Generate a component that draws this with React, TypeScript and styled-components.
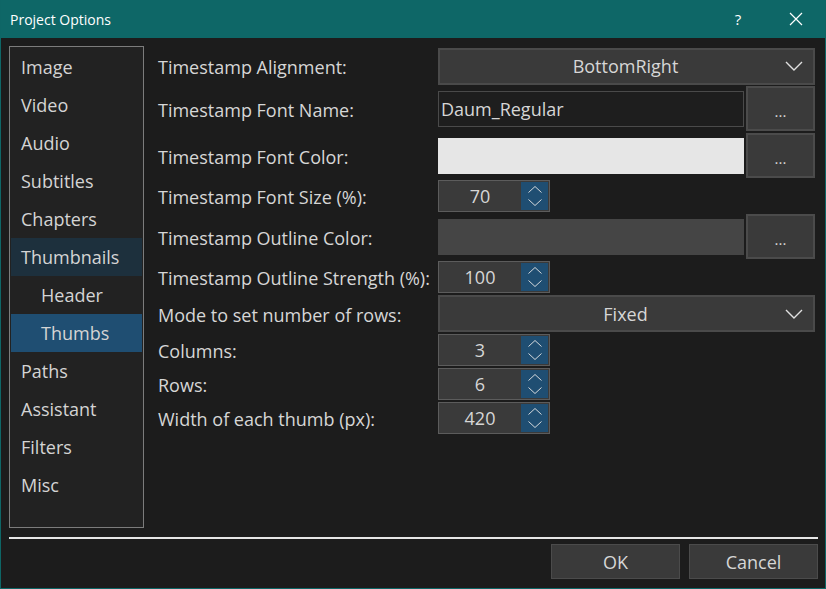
import React from "react";
import styled, { createGlobalStyle } from "styled-components";

const GlobalStyle = createGlobalStyle`
  html, body { margin: 0; padding: 0; background: #1c1c1c; }
  * { box-sizing: border-box; }
`;

const FONT = `"Open Sans", "Noto Sans", "Liberation Sans", sans-serif`;

const Window = styled.div`
  width: 826px;
  height: 589px;
  display: flex;
  flex-direction: column;
  background: #1c1c1c;
  border: 1px solid #0e6666;
  border-top: none;
  font-family: ${FONT};
  color: #d6d6d6;
  overflow: hidden;
`;

const TitleBar = styled.div`
  height: 38px;
  flex: none;
  background: #0e6767;
  display: flex;
  align-items: center;
  padding-left: 9px;
  color: #ffffff;
  font-size: 14px;
`;

const TitleText = styled.div`
  flex: 1;
`;

const TitleButton = styled.div`
  width: 58px;
  height: 38px;
  display: flex;
  align-items: center;
  justify-content: center;
  color: #ffffff;
  font-size: 15px;
`;

const Body = styled.div`
  flex: 1;
  display: flex;
  flex-direction: column;
  padding: 8px 7px 0 8px;
`;

const Main = styled.div`
  display: flex;
  height: 482px;
`;

const Sidebar = styled.div`
  width: 135px;
  height: 482px;
  border: 1px solid #7c7c7c;
  background: #222222;
  padding: 1px;
  display: flex;
  flex-direction: column;
`;

const NavItem = styled.div<{ $indent?: boolean; $state?: "active" | "parent" }>`
  height: 38px;
  flex: none;
  display: flex;
  align-items: center;
  padding-left: ${(p) => (p.$indent ? 30 : 10)}px;
  font-size: 18px;
  color: #d4d4d4;
  background: ${(p) =>
    p.$state === "active" ? "#1f4e72" : p.$state === "parent" ? "#1d303d" : "transparent"};
`;

const Panel = styled.div`
  margin-left: 14px;
  padding-top: 1px;
  display: flex;
  flex-direction: column;
`;

const Row = styled.div<{ $h: number }>`
  height: ${(p) => p.$h}px;
  display: grid;
  grid-template-columns: 280px 377px;
  align-items: center;
`;

const Label = styled.div`
  font-size: 18px;
  color: #d6d6d6;
  padding-top: 2px;
  white-space: nowrap;
`;

const Combo = styled.div`
  height: 37px;
  background: #3a3a3a;
  border: 2px solid #4a4a4a;
  display: flex;
  align-items: center;
  position: relative;
  font-size: 18px;
  color: #d6d6d6;
`;

const ComboText = styled.div`
  flex: 1;
  text-align: center;
  padding-right: 2px;
`;

const ComboArrow = styled.svg`
  position: absolute;
  right: 10px;
  top: 50%;
  margin-top: -5px;
`;

const FieldWithButton = styled.div`
  display: flex;
  align-items: center;
`;

const Field = styled.div<{ $bg: string; $bordered?: boolean }>`
  width: 306px;
  height: 36px;
  background: ${(p) => p.$bg};
  border: ${(p) => (p.$bordered ? "1px solid #4a4a4a" : "none")};
  display: flex;
  align-items: center;
  padding-left: 2px;
  font-size: 18px;
  color: #d6d6d6;
`;

const DotsButton = styled.div`
  width: 69px;
  height: 45px;
  margin-left: 2px;
  background: #3a3a3a;
  border: 2px solid #4b4b4b;
  display: flex;
  align-items: center;
  justify-content: center;
  font-size: 15px;
  color: #d6d6d6;
  padding-top: 4px;
`;

const Spinner = styled.div`
  width: 112px;
  height: 32px;
  border: 1px solid #5c5c5c;
  background: #3a3a3a;
  display: flex;
  padding: 1px 1px 1px 0;
`;

const SpinValue = styled.div`
  flex: 1;
  display: flex;
  align-items: center;
  justify-content: center;
  font-size: 18px;
  color: #d6d6d6;
`;

const SpinButtons = styled.div`
  width: 27px;
  background: #1f4e72;
  display: flex;
  flex-direction: column;
  align-items: center;
  justify-content: center;
  gap: 6px;
`;

const Separator = styled.div`
  margin-top: 9px;
  height: 2px;
  background: #e6e6e6;
  width: 809px;
`;

const Footer = styled.div`
  display: flex;
  justify-content: flex-end;
  gap: 9px;
  padding-top: 5px;
`;

const DialogButton = styled.div`
  width: 129px;
  height: 35px;
  background: #3a3a3a;
  border: 1px solid #4b4b4b;
  display: flex;
  align-items: center;
  justify-content: center;
  font-size: 18px;
  color: #d6d6d6;
`;

const Chevron = ({ up }: { up?: boolean }) => (
  <svg width="14" height="7" viewBox="0 0 14 7">
    <path
      d={up ? "M0.5 6.5 L7 0.5 L13.5 6.5" : "M0.5 0.5 L7 6.5 L13.5 0.5"}
      fill="none"
      stroke="#e8e8e8"
      strokeWidth="0.9"
    />
  </svg>
);

const ComboBox = ({ value }: { value: string }) => (
  <Combo>
    <ComboText>{value}</ComboText>
    <ComboArrow width="18" height="10" viewBox="0 0 18 10">
      <path d="M1 1 L9 9 L17 1" fill="none" stroke="#e0e0e0" strokeWidth="1.4" />
    </ComboArrow>
  </Combo>
);

const NumberBox = ({ value }: { value: string }) => (
  <Spinner>
    <SpinValue>{value}</SpinValue>
    <SpinButtons>
      <Chevron up />
      <Chevron />
    </SpinButtons>
  </Spinner>
);

const nav: { label: string; indent?: boolean; state?: "active" | "parent" }[] = [
  { label: "Image" },
  { label: "Video" },
  { label: "Audio" },
  { label: "Subtitles" },
  { label: "Chapters" },
  { label: "Thumbnails", state: "parent" },
  { label: "Header", indent: true },
  { label: "Thumbs", indent: true, state: "active" },
  { label: "Paths" },
  { label: "Assistant" },
  { label: "Filters" },
  { label: "Misc" },
];

export default function App() {
  return (
    <>
      <GlobalStyle />
      <Window>
        <TitleBar>
          <TitleText>Project Options</TitleText>
          <TitleButton>?</TitleButton>
          <TitleButton>
            <svg width="14" height="14" viewBox="0 0 14 14">
              <path d="M1 1 L13 13 M13 1 L1 13" stroke="#ffffff" strokeWidth="1.2" />
            </svg>
          </TitleButton>
        </TitleBar>
        <Body>
          <Main>
            <Sidebar>
              {nav.map((n) => (
                <NavItem key={n.label} $indent={n.indent} $state={n.state}>
                  {n.label}
                </NavItem>
              ))}
            </Sidebar>
            <Panel>
              <Row $h={38}>
                <Label>Timestamp Alignment:</Label>
                <ComboBox value="BottomRight" />
              </Row>
              <Row $h={47}>
                <Label>Timestamp Font Name:</Label>
                <FieldWithButton>
                  <Field $bg="#1e1e1e" $bordered>Daum_Regular</Field>
                  <DotsButton>...</DotsButton>
                </FieldWithButton>
              </Row>
              <Row $h={47}>
                <Label>Timestamp Font Color:</Label>
                <FieldWithButton>
                  <Field $bg="#e6e6e6" />
                  <DotsButton>...</DotsButton>
                </FieldWithButton>
              </Row>
              <Row $h={34}>
                <Label>Timestamp Font Size (%):</Label>
                <NumberBox value="70" />
              </Row>
              <Row $h={47}>
                <Label>Timestamp Outline Color:</Label>
                <FieldWithButton>
                  <Field $bg="#454545" />
                  <DotsButton>...</DotsButton>
                </FieldWithButton>
              </Row>
              <Row $h={34}>
                <Label>Timestamp Outline Strength (%):</Label>
                <NumberBox value="100" />
              </Row>
              <Row $h={39}>
                <Label>Mode to set number of rows:</Label>
                <ComboBox value="Fixed" />
              </Row>
              <Row $h={34}>
                <Label>Columns:</Label>
                <NumberBox value="3" />
              </Row>
              <Row $h={34}>
                <Label>Rows:</Label>
                <NumberBox value="6" />
              </Row>
              <Row $h={34}>
                <Label>Width of each thumb (px):</Label>
                <NumberBox value="420" />
              </Row>
            </Panel>
          </Main>
          <Separator />
          <Footer>
            <DialogButton>OK</DialogButton>
            <DialogButton>Cancel</DialogButton>
          </Footer>
        </Body>
      </Window>
    </>
  );
}
